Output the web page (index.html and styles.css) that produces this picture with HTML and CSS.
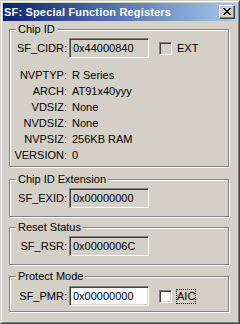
FILE: index.html
```html
<!DOCTYPE html>
<html>
<head>
<meta charset="utf-8">
<link rel="stylesheet" href="styles.css">
</head>
<body>
<div class="window">
  <div class="frame">
    <div class="titlebar">
      <div class="title">SF: Special Function Registers</div>
      <div class="close">
        <svg width="8" height="7" viewBox="0 0 8 7" shape-rendering="crispEdges">
          <path fill="#000" d="M0 0h2v1H0zM6 0h2v1H6zM1 1h2v1H1zM5 1h2v1H5zM2 2h4v1H2zM3 3h2v1H3zM2 4h4v1H2zM1 5h2v1H1zM5 5h2v1H5zM0 6h2v1H0zM6 6h2v1H6z"/>
        </svg>
      </div>
    </div>
    <div class="content">
      <div class="group group-chip">
        <div class="legend">Chip ID</div>
        <div class="row">
          <div class="label">SF_CIDR:</div>
          <div class="field">0x44000840</div>
          <div class="check"></div>
          <div class="check-label">EXT</div>
        </div>
        <div class="info">
          <div class="ilabel">NVPTYP:</div><div class="ivalue">R Series</div>
          <div class="ilabel">ARCH:</div><div class="ivalue">AT91x40yyy</div>
          <div class="ilabel">VDSIZ:</div><div class="ivalue">None</div>
          <div class="ilabel">NVDSIZ:</div><div class="ivalue">None</div>
          <div class="ilabel">NVPSIZ:</div><div class="ivalue">256KB RAM</div>
          <div class="ilabel">VERSION:</div><div class="ivalue">0</div>
        </div>
      </div>
      <div class="group group-ext">
        <div class="legend">Chip ID Extension</div>
        <div class="row">
          <div class="label">SF_EXID:</div>
          <div class="field">0x00000000</div>
        </div>
      </div>
      <div class="group group-rs">
        <div class="legend">Reset Status</div>
        <div class="row">
          <div class="label">SF_RSR:</div>
          <div class="field">0x0000006C</div>
        </div>
      </div>
      <div class="group group-pm">
        <div class="legend">Protect Mode</div>
        <div class="row row-pm">
          <div class="label">SF_PMR:</div>
          <div class="field field-edit">0x00000000</div>
          <div class="check check-white"></div>
          <div class="check-label focus">AIC</div>
        </div>
      </div>
    </div>
  </div>
</div>
</body>
</html>
```
FILE: styles.css
```css
* { box-sizing: border-box; }
html, body { margin: 0; padding: 0; }
body {
  width: 240px;
  height: 324px;
  background: #d4d0c8;
  font-family: "Liberation Sans", Arial, sans-serif;
  font-size: 11px;
  line-height: 13px;
  color: #000;
  overflow: hidden;
}
.window {
  width: 240px;
  height: 324px;
  border: 1px solid;
  border-color: #d4d0c8 #404040 #404040 #d4d0c8;
}
.frame {
  height: 100%;
  border: 1px solid;
  border-color: #fff #808080 #808080 #fff;
  padding: 1px;
  display: flex;
  flex-direction: column;
}
.titlebar {
  height: 18px;
  flex: none;
  display: flex;
  align-items: center;
  background: linear-gradient(to right, #0a246a, #a6caf0);
  padding: 0 2px 0 1px;
}
.title {
  flex: 1;
  color: #fff;
  font-weight: bold;
  letter-spacing: 0.17px;
  white-space: nowrap;
  line-height: 18px;
}
.close {
  width: 16px;
  height: 14px;
  background: #d4d0c8;
  border: 1px solid;
  border-color: #fff #404040 #404040 #fff;
  box-shadow: inset -1px -1px #808080;
  display: flex;
  align-items: center;
  justify-content: center;
  padding: 0 1px 1px 0;
}
.close svg { display: block; }
.content {
  padding: 0 8px 0 6px;
  display: flex;
  flex-direction: column;
}
.group {
  border: 1px solid #808080;
  box-shadow: inset 1px 1px #fff, 1px 1px #fff;
}
.group-chip { margin-top: 8px; height: 138px; }
.group-ext { margin-top: 12px; height: 38px; }
.group-rs { margin-top: 10px; height: 38px; }
.group-pm { margin-top: 11px; height: 36px; }
.legend {
  margin: -7px 0 0 6px;
  padding: 0 2px;
  background: #d4d0c8;
  width: max-content;
  height: 13px;
}
.row {
  margin-top: 2px;
  height: 20px;
  display: flex;
  align-items: center;
}
.row-pm { margin-top: 3px; }
.label {
  width: 57px;
  text-align: right;
  margin-right: 2px;
  white-space: nowrap;
}
.field {
  width: 80px;
  height: 20px;
  border: 1px solid;
  border-color: #808080 #fff #fff #808080;
  box-shadow: inset 1px 1px #404040, inset -1px -1px #d4d0c8;
  background: #d4d0c8;
  padding-left: 3px;
  line-height: 18px;
  white-space: nowrap;
}
.field-edit { background: #fff; }
.check {
  width: 13px;
  height: 13px;
  margin-left: 10px;
  border: 1px solid;
  border-color: #808080 #fff #fff #808080;
  box-shadow: inset 1px 1px #404040, inset -1px -1px #d4d0c8;
  background: #d4d0c8;
}
.check-white { background: #fff; }
.check-label {
  margin-left: 5px;
}
.focus {
  margin-left: 4px;
  padding: 1px 1px;
  outline: 1px dotted #000;
  outline-offset: -1px;
}
.info {
  margin-top: 9px;
  display: grid;
  grid-template-columns: 57px auto;
  column-gap: 5px;
  grid-auto-rows: 16px;
  line-height: 16px;
}
.ilabel { text-align: right; white-space: nowrap; }
.ivalue { white-space: nowrap; }
```
